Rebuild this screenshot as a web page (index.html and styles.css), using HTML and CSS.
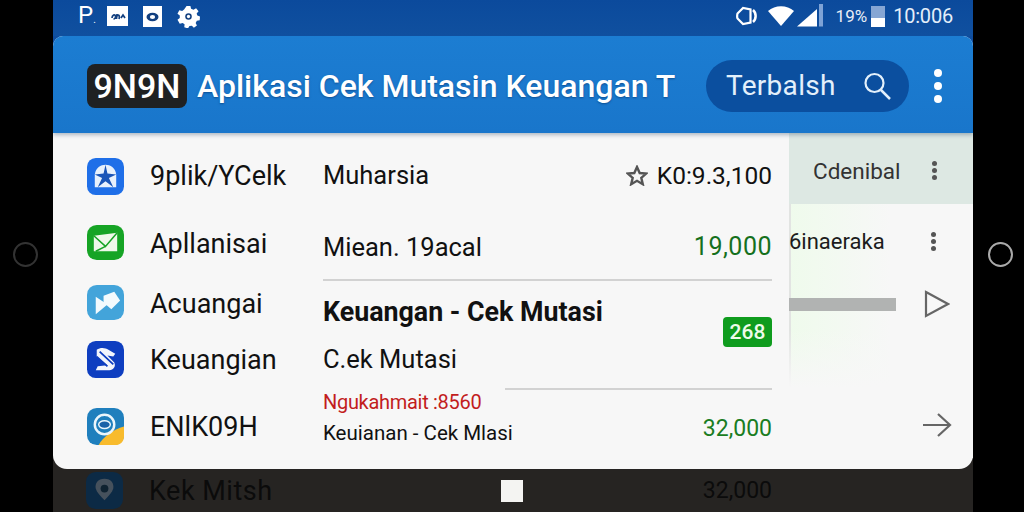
FILE: index.html
```html
<!DOCTYPE html>
<html lang="en">
<head>
  <meta charset="UTF-8">
  <title>Aplikasi Cek Mutasi Keuangan</title>
  <link rel="stylesheet" href="styles.css">
</head>
<body>
  <div class="side side-left"><span class="ring"></span></div>

  <div class="phone">
    <div class="status">
      <div class="status-left">
        <span class="status-p">P<small>.</small></span>
        <svg class="si" width="21" height="20" viewBox="0 0 21 20"><rect width="21" height="20" fill="#fff"/><path d="M5 12c0-3 3-4 3.500-2s-1 3-2 3M10 8l-.5 5M10 10c2-2 3 0 2 3M14 12l2-3 2 3" fill="none" stroke="#123f7f" stroke-width="1.700"/></svg>
        <svg class="si" width="19" height="21" viewBox="0 0 19 21"><rect width="19" height="21" fill="#fff"/><ellipse cx="9.500" cy="11" rx="6" ry="4.200" fill="#123f7f"/><ellipse cx="9.500" cy="11" rx="2.600" ry="2" fill="#fff"/></svg>
        <svg class="si" width="23" height="23" viewBox="0 0 24 24"><path d="M10 1h4l.7 3 2.500 1 2.700-1.500 2.600 3-2 2.300.7 2.200 2.800 1-.3 4-3 .5-1.200 2.300 1.300 2.700-3.200 2.300-2.100-2.100-2.500.3-1.600 2.500-3.800-1.300.3-3-2-1.500-3 .8L.5 15.500l2.400-1.900V11L.5 9l1.900-3.600 3 .8 2-1.500z" fill="#fff"/><circle cx="12" cy="12" r="3.400" fill="#123f7f"/><circle cx="12" cy="12" r="1.700" fill="#fff"/></svg>
      </div>
      <div class="status-right">
        <svg class="vib" width="22" height="20" viewBox="0 0 22 20"><path d="M7 2 1.500 7.500c-.5 2-.5 3.500 0 5L7 18l7.500-1.500v-13z" fill="none" stroke="#fff" stroke-width="2.200"/><path d="M17 4c3.500 3 3.500 9 0 12" fill="none" stroke="#fff" stroke-width="2.500"/></svg>
        <svg class="wifi" width="26" height="20" viewBox="0 0 26 20"><path d="M0 5C7-1.500 19-1.500 26 5L13 20z" fill="#fff"/></svg>
        <svg class="signal" width="26" height="23" viewBox="0 0 26 23"><path d="M0 22.500 20 5v17.500z" fill="#fff"/><rect x="22" y="0" width="4" height="22.500" fill="#7ea3d6"/></svg>
        <span class="pct">19%</span>
        <span class="battery"></span>
        <span class="clock">10:006</span>
      </div>
    </div>

    <div class="card">
      <header class="card-head">
        <span class="logo">9N9N</span>
        <h1>Aplikasi Cek Mutasin Keuangan T</h1>
        <div class="search">
          <span>Terbalsh</span>
          <svg width="30" height="30" viewBox="0 0 30 30"><circle cx="12.500" cy="12" r="9" fill="none" stroke="#e3f0fb" stroke-width="2.200"/><path d="m19 19 9 9" stroke="#e3f0fb" stroke-width="2.500"/></svg>
        </div>
        <span class="dots dots-white"><i></i><i></i><i></i></span>
      </header>

      <div class="card-body">
        <div class="main">
          <div class="apps">
            <div class="app a1">
              <svg class="icon" viewBox="0 0 38 38"><rect width="38" height="38" rx="9" fill="#1f6fe8"/><path d="M8 17C9 10 14 7 19 7s10 3 11 10v13H8z" fill="#e8f1fc"/><path d="m19 7 2 9 9 1-7.500 3.500L27 30l-8-6-8 6 4.500-9.500L8 17l9-1z" fill="#1b56b8"/></svg>
              <span>9plik/YCelk</span>
            </div>
            <div class="app a2">
              <svg class="icon" viewBox="0 0 38 38"><rect width="38" height="36" rx="10" fill="#16a425"/><path d="M7 11 31 8v19H7z" fill="#eef8ea"/><path d="m7 11 12 11 12-14M9 27l10-5" fill="none" stroke="#16a425" stroke-width="1.600"/></svg>
              <span>Apllanisai</span>
            </div>
            <div class="app a3">
              <svg class="icon" viewBox="0 0 38 38"><rect width="38" height="36" rx="10" fill="#43a4da"/><path d="M9 12 21 20 9 30z" fill="#f3fafd"/><path d="m17 11 11-4 6 9-9 9-8-7z" fill="#f3fafd"/></svg>
              <span>Acuangai</span>
            </div>
            <div class="app a4">
              <svg class="icon" viewBox="0 0 38 38"><rect width="38" height="38" rx="9" fill="#0e3ec0"/><path d="M10 9c4-3 9-2 12 0l7 4-2 3-6-1 7 7c2 4-1 8-5 8H9l2-4 10-1-11-9z" fill="#f2f5fc"/><path d="m13 11 14 13M10 16l11 10" stroke="#0e3ec0" stroke-width="1.800"/></svg>
              <span>Keuangian</span>
            </div>
            <div class="app a5">
              <svg class="icon" viewBox="0 0 38 38"><rect width="38" height="38" rx="10" fill="#1f7fbd"/><path d="M12 38c4-8 15-16 26-19v10c0 6-4 9-9 9z" fill="#f8bb2d"/><circle cx="18" cy="17" r="10" fill="none" stroke="#eaf5fb" stroke-width="2.500"/><ellipse cx="18" cy="17" rx="6" ry="4" fill="#1a62a8" stroke="#eaf5fb" stroke-width="1.500"/></svg>
              <span>ENlK09H</span>
            </div>
          </div>

          <div class="details">
            <div class="line line-1">
              <span>Muharsia</span>
              <span class="amount-dark">
                <svg width="22" height="21" viewBox="0 0 22 21"><path d="m11 2 2.700 6 6.500.6-4.900 4.300 1.500 6.300-5.800-3.400-5.800 3.400 1.500-6.300-4.900-4.300 6.500-.6z" fill="none" stroke="#555" stroke-width="2.400"/></svg>
                K0:9.3,100
              </span>
            </div>
            <div class="line line-2">
              <span>Miean. 19acal</span>
              <span class="amount">19,000</span>
            </div>
            <div class="line line-3">
              <strong>Keuangan - Cek Mutasi</strong>
              <span class="badge">268</span>
            </div>
            <div class="line line-4">C.ek Mutasi</div>
            <div class="rule"></div>
            <div class="line line-5">
              <div class="stack">
                <span class="red">Ngukahmait :8560</span>
                <span class="small">Keuianan - Cek Mlasi</span>
              </div>
              <span class="amount amount-last">32,000</span>
            </div>
          </div>
        </div>

        <aside class="extra">
          <div class="extra-top">
            <span>Cdenibal</span>
            <span class="dots dots-gray"><i></i><i></i><i></i></span>
          </div>
          <div class="extra-row row-a">
            <span class="clip">6inaeraka</span>
            <span class="dots dots-gray"><i></i><i></i><i></i></span>
          </div>
          <div class="extra-row row-b">
            <span class="bar"></span>
            <svg width="26" height="28" viewBox="0 0 26 28"><path d="M2 2 24 14 2 26z" fill="none" stroke="#666" stroke-width="2.200"/></svg>
          </div>
          <div class="extra-row row-c">
            <svg width="30" height="26" viewBox="0 0 30 26"><path d="M1 13h27M16 2l12 11-12 11" fill="none" stroke="#666" stroke-width="2.200"/></svg>
          </div>
        </aside>
      </div>
    </div>

    <div class="nav">
      <svg class="icon" viewBox="0 0 38 38"><rect width="38" height="38" rx="10" fill="#0c2a45"/><path d="M19 7c7 0 10 5 9 10-1 4-5 8-9 12-4-4-8-8-9-12-1-5 2-10 9-10z" fill="#46515c"/><circle cx="19" cy="17" r="4" fill="#0f2230"/></svg>
      <span class="nav-text">Kek Mitsh</span>
      <span class="square"></span>
      <span class="nav-amount">32,000</span>
    </div>
  </div>

  <div class="side side-right"><span class="ring"></span></div>
</body>
</html>
```

FILE: styles.css
```css
* {
  box-sizing: border-box;
}
body {
  margin: 0;
  width: 1024px;
  height: 512px;
  overflow: hidden;
  display: flex;
  background-color: #000;
  font-family: Roboto, "Noto Sans", sans-serif;
  color: #111;
}
.side {
  display: flex;
  align-items: center;
  justify-content: center;
  padding-bottom: 4px;
}
.side-left {
  width: 53px;
  padding-right: 3px;
}
.side-right {
  width: 51px;
  padding-left: 3px;
}
.ring {
  width: 25px;
  height: 25px;
  border: 2px solid #aaa;
  border-radius: 50%;
}
.side-left .ring {
  border-color: #333;
}

.phone {
  width: 920px;
  height: 512px;
  display: flex;
  flex-direction: column;
  background: linear-gradient(#0e4c9e 0 50%, #262422 50%);
}

/* status bar */
.status {
  height: 36px;
  flex: none;
  display: flex;
  justify-content: space-between;
  align-items: center;
  padding: 0 20px 4px 25px;
  background: linear-gradient(#0b4a9c, #10509f);
  color: #fff;
}
.status-left,
.status-right {
  display: flex;
  align-items: center;
}
.status-left {
  gap: 15px;
}
.status-p {
  width: 14px;
  margin-top: 3px;
  font-size: 24px;
  line-height: 24px;
}
.status-p small {
  font-size: 10px;
}
.status-right svg {
  margin-right: 10px;
}
.status-right .wifi {
  margin-right: 3px;
}
.status-right .signal {
  margin-right: 13px;
  margin-top: -2px;
}
.pct {
  font-size: 17px;
  opacity: 0.9;
  margin-right: 4px;
}
.battery {
  width: 14px;
  height: 21px;
  margin-right: 8px;
  background: linear-gradient(#86a6d4 0 55%, #fff 55%);
}
.clock {
  font-size: 20px;
  letter-spacing: -0.2px;
  color: #e4eefa;
}

/* card */
.card {
  height: 433px;
  flex: none;
  display: flex;
  flex-direction: column;
  overflow: hidden;
  border-radius: 10px 10px 14px 14px;
  background-color: #f7f7f7;
}
.card-head {
  height: 97px;
  flex: none;
  display: flex;
  align-items: center;
  padding: 2px 31px 0 34px;
  background: linear-gradient(#1c7dd2, #1976cb);
  box-shadow: 0 2px 4px rgba(40, 70, 100, 0.35);
  position: relative;
  color: #fff;
}
.logo {
  width: 100px;
  height: 44px;
  flex: none;
  display: flex;
  align-items: center;
  justify-content: center;
  background-color: #1f2123;
  border-radius: 8px;
  font-size: 34px;
  font-weight: 500;
}
.card-head h1 {
  flex: 1;
  margin: 0 0 0 10px;
  font-size: 32px;
  font-weight: 500;
  white-space: nowrap;
  text-shadow: 0 1px 2px rgba(0, 40, 90, 0.5);
}
.search {
  width: 203px;
  height: 52px;
  flex: none;
  margin-right: 25px;
  display: flex;
  align-items: center;
  justify-content: space-between;
  padding: 0 17px 0 20px;
  background-color: #0b4f9f;
  border-radius: 26px;
  font-size: 28px;
  letter-spacing: 0.3px;
  color: #e3f0fb;
}
.dots {
  display: flex;
  flex-direction: column;
  align-items: center;
}
.dots i {
  border-radius: 50%;
}
.dots-white {
  gap: 5px;
}
.dots-white i {
  width: 8px;
  height: 8px;
  background-color: #fff;
}
.dots-gray {
  gap: 2px;
}
.dots-gray i {
  width: 5px;
  height: 5px;
  background-color: #555;
}

.card-body {
  flex: 1;
  display: flex;
  min-height: 0;
}
.main {
  width: 736px;
  flex: none;
  display: flex;
  padding-left: 34px;
}
.icon {
  width: 37px;
  height: 37px;
  flex: none;
}

/* app column */
.apps {
  width: 236px;
  flex: none;
  padding-top: 3px;
  font-size: 27px;
}
.app {
  display: flex;
  align-items: center;
  gap: 26px;
}
.a1 { height: 80px; }
.a2 { height: 55px; }
.a3 { height: 65px; }
.a4 { height: 47px; }
.a5 { height: 86px; }
.a5 span {
  margin-top: 2px;
}

/* detail column */
.details {
  width: 449px;
  flex: none;
  font-size: 25.500px;
}
.line {
  display: flex;
  justify-content: space-between;
  align-items: center;
}
.line-1 {
  height: 84px;
}
.line-2 {
  height: 64px;
  padding-bottom: 3px;
  border-bottom: 2px solid #d2d2d2;
}
.line-3 {
  height: 63px;
  align-items: flex-start;
  padding-top: 15px;
}
.line-3 strong {
  font-weight: 700;
  font-size: 26.800px;
}
.badge {
  margin-top: 21px;
  width: 49px;
  height: 30px;
  display: flex;
  align-items: center;
  justify-content: center;
  background-color: #0f9c1e;
  border-radius: 4px;
  color: #eefbea;
  font-size: 21px;
  font-weight: 500;
}
.line-4 {
  height: 30px;
}
.rule {
  height: 2px;
  margin: 14px 0 0 182px;
  background-color: #d2d2d2;
}
.line-5 {
  height: 62px;
  align-items: flex-start;
}
.stack {
  display: flex;
  flex-direction: column;
}
.red {
  font-size: 20px;
  line-height: 24px;
  letter-spacing: -0.3px;
  color: #c21d1d;
}
.small {
  margin-top: 6px;
  font-size: 20.500px;
  line-height: 26px;
}
.amount-dark {
  display: flex;
  align-items: center;
  gap: 9px;
  font-size: 24.500px;
}
.amount {
  color: #15701d;
  font-size: 25px;
  letter-spacing: 0.5px;
}
.amount-last {
  margin-top: 24px;
  line-height: 30px;
  font-size: 23px;
  letter-spacing: 0;
  color: #1a7d22;
}

/* right column */
.extra {
  width: 184px;
  flex: none;
  font-size: 22.500px;
  margin-bottom: 11px;
  box-shadow: inset 2px 0 0 #e2e4e2;
  background: linear-gradient(90deg, #effbec, #f7f7f7 55%);
}
.extra-top {
  height: 71px;
  display: flex;
  justify-content: space-between;
  align-items: center;
  padding: 4px 36px 0 24px;
  background-color: #dde8e3;
  color: #333;
}
.extra-row {
  display: flex;
  justify-content: space-between;
  align-items: center;
  padding-right: 37px;
}
.row-a {
  height: 74px;
  font-size: 22px;
  color: #1c1c1c;
}
.row-b {
  height: 52px;
  padding-right: 23px;
}
.bar {
  width: 107px;
  height: 13px;
  background-color: #b1b3b2;
}
.row-c {
  height: 128px;
  align-items: flex-end;
  justify-content: flex-end;
  padding: 0 21px 20px 0;
  background: linear-gradient(rgba(247, 247, 247, 0), #f7f7f7 45%);
}

/* behind the card */
.nav {
  flex: 1;
  display: flex;
  align-items: center;
  padding: 0 201px 0 33px;
  color: #0b0b0b;
  font-size: 27px;
}
.nav-text {
  width: 352px;
  margin-left: 26px;
  letter-spacing: 0.5px;
}
.square {
  width: 22px;
  height: 22px;
  background-color: #f4f4f2;
}
.nav-amount {
  margin-left: auto;
  font-size: 23px;
}
```
